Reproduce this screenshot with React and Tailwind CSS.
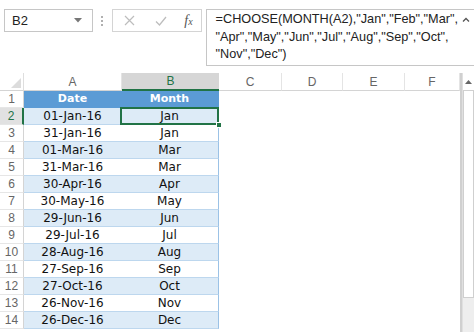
import React from 'react';

const rows = [
  ['01-Jan-16', 'Jan'],
  ['31-Jan-16', 'Jan'],
  ['01-Mar-16', 'Mar'],
  ['31-Mar-16', 'Mar'],
  ['30-Apr-16', 'Apr'],
  ['30-May-16', 'May'],
  ['29-Jun-16', 'Jun'],
  ['29-Jul-16', 'Jul'],
  ['28-Aug-16', 'Aug'],
  ['27-Sep-16', 'Sep'],
  ['27-Oct-16', 'Oct'],
  ['26-Nov-16', 'Nov'],
  ['26-Dec-16', 'Dec'],
];

const uiFont = { fontFamily: '"Liberation Sans", Arial, sans-serif' };
const cellFont = { fontFamily: '"DejaVu Sans", Verdana, sans-serif' };

function FormulaBar() {
  return (
    <div className="flex items-start h-[73px] pt-[9px] pl-[4px]" style={uiFont}>
      {/* Name box */}
      <div className="w-[93px] h-[23px] border border-[#c6c6c6] bg-white flex items-center justify-between pl-[7px] pr-[10px]">
        <span className="text-[13px] text-[#222]">B2</span>
        <svg width="8" height="5" viewBox="0 0 8 5">
          <polygon points="0,0 8,0 4,4.5" fill="#777" />
        </svg>
      </div>

      {/* dots */}
      <div className="w-[21px] h-[23px] flex flex-col items-center justify-center gap-[2px]">
        <div className="w-[2px] h-[2px] bg-[#b0b0b0]" />
        <div className="w-[2px] h-[2px] bg-[#b0b0b0]" />
        <div className="w-[2px] h-[2px] bg-[#b0b0b0]" />
      </div>

      {/* buttons */}
      <div className="w-[95px] h-[23px] border border-[#d4d4d4] bg-white flex items-center">
        <div className="w-[30px] flex justify-center ml-[1px]">
          <svg width="11" height="11" viewBox="0 0 11 11">
            <path d="M1 1 L10 10 M10 1 L1 10" stroke="#bdbdbd" strokeWidth="1.2" />
          </svg>
        </div>
        <div className="w-[34px] flex justify-center">
          <svg width="12" height="10" viewBox="0 0 12 10">
            <path d="M1 5.5 L4.5 9 L11 1" stroke="#bdbdbd" strokeWidth="1.3" fill="none" />
          </svg>
        </div>
        <div className="flex-1 flex justify-center pr-[2px]">
          <span className="text-[14px] italic text-[#555]" style={{ fontFamily: '"Liberation Serif", serif' }}>
            f<span className="text-[10px]">x</span>
          </span>
        </div>
      </div>

      {/* formula */}
      <div className="ml-[4px] flex-1 h-[57px] border border-[#c6c6c6] border-r-0 bg-white flex justify-between pl-[9px] pt-[1px]">
        <div className="text-[12.7px] leading-[17.5px] text-[#222]">
          <div>=CHOOSE(MONTH(A2),"Jan","Feb","Mar",</div>
          <div>"Apr","May","Jun","Jul","Aug","Sep","Oct",</div>
          <div>"Nov","Dec")</div>
        </div>
        <div className="w-[16px] pt-[6px] flex justify-center">
          <svg width="8" height="5" viewBox="0 0 8 5">
            <path d="M1 4.5 L4 1.5 L7 4.5" stroke="#555" strokeWidth="1.3" fill="none" />
          </svg>
        </div>
      </div>
    </div>
  );
}

function ColumnHeaders() {
  const cols = [
    ['C', 'w-[63px]'],
    ['D', 'w-[61px]'],
    ['E', 'w-[62px]'],
    ['F', 'w-[55px]'],
  ];
  return (
    <div className="flex h-[18px] text-[12px] text-[#666]" style={uiFont}>
      <div className="w-[24px] h-full bg-white border-b border-[#d4d4d4] border-r border-r-[#dedede] flex items-end justify-end pr-[2px] pb-[2px]">
        <svg width="10" height="10" viewBox="0 0 10 10">
          <polygon points="10,0 10,10 0,10" fill="#dcdcdc" />
        </svg>
      </div>
      <div className="w-[98px] h-full bg-white border-b border-[#d4d4d4] border-r border-r-[#e4e4e4] flex items-center justify-center">
        A
      </div>
      <div className="w-[97px] h-full bg-[#d6d6d6] border-b-2 border-[#217346] flex items-center justify-center text-[#217346]">
        B
      </div>
      {cols.map(([c, w]) => (
        <div
          key={c}
          className={`${w} h-full bg-white border-b border-[#d4d4d4] border-r border-r-[#e4e4e4] flex items-center justify-center`}
        >
          {c}
        </div>
      ))}
    </div>
  );
}

function Sheet() {
  return (
    <div className="w-[460px]">
      <ColumnHeaders />

      {/* row 1: table header */}
      <div className="flex h-[17px]">
        <div
          className="w-[24px] h-full border-r border-[#d4d4d4] border-b border-b-[#e6e6e6] flex items-center justify-center text-[12px] text-[#666]"
          style={uiFont}
        >
          1
        </div>
        <div
          className="w-[195px] h-full bg-[#5b9bd5] flex text-white text-[11px] font-bold border-r border-[#5b9bd5]"
          style={cellFont}
        >
          <div className="w-[97px] flex items-center justify-center">Date</div>
          <div className="flex-1 flex items-center justify-center">Month</div>
        </div>
      </div>

      {rows.map(([d, m], i) => {
        const n = i + 2;
        const banded = i % 2 === 0;
        const selected = n === 2;
        return (
          <div key={n} className="flex h-[17px]">
            <div
              className={`w-[24px] h-full flex items-center justify-center text-[12px] border-b border-[#e6e6e6] ${
                selected
                  ? 'bg-[#e1e1e1] border-r-2 border-r-[#217346] text-[#217346]'
                  : 'bg-white border-r border-r-[#d4d4d4] text-[#666]'
              }`}
              style={uiFont}
            >
              {n}
            </div>
            <div
              className={`w-[195px] h-full flex text-[12px] text-[#111] border-b border-[#bdd7ee] border-r border-r-[#9bc2e6] ${
                banded ? 'bg-[#ddebf7]' : 'bg-white'
              }`}
              style={cellFont}
            >
              <div className="w-[97px] flex items-center justify-center">{d}</div>
              <div
                className={`flex-1 flex items-center justify-center relative ${
                  selected ? 'outline-2 outline-[#217346] -outline-offset-1' : ''
                }`}
              >
                {m}
                {selected && (
                  <div className="absolute right-[-4px] bottom-[-4px] w-[6px] h-[6px] bg-[#217346] border border-white" />
                )}
              </div>
            </div>
          </div>
        );
      })}
    </div>
  );
}

function ScrollBar() {
  return (
    <div className="flex h-[259px]">
      <div className="w-[2px] bg-[#d0d0d0]" />
      <div className="flex-1 flex flex-col border-l border-[#e0e0e0] bg-[#f0f0f0]">
        <div className="h-[18px] bg-white border-b border-[#d0d0d0] flex items-center justify-center">
          <svg width="7" height="4" viewBox="0 0 7 4">
            <polygon points="0,4 7,4 3.5,0" fill="#666" />
          </svg>
        </div>
        <div className="h-[207px] bg-white border border-t-0 border-[#cfcfcf]" />
        <div className="flex-1 bg-[#eeeeee]" />
      </div>
    </div>
  );
}

export default function App() {
  return (
    <div className="w-[474px] h-[332px] bg-white overflow-hidden">
      <FormulaBar />
      <div className="flex">
        <Sheet />
        <div className="flex-1">
          <ScrollBar />
        </div>
      </div>
    </div>
  );
}
